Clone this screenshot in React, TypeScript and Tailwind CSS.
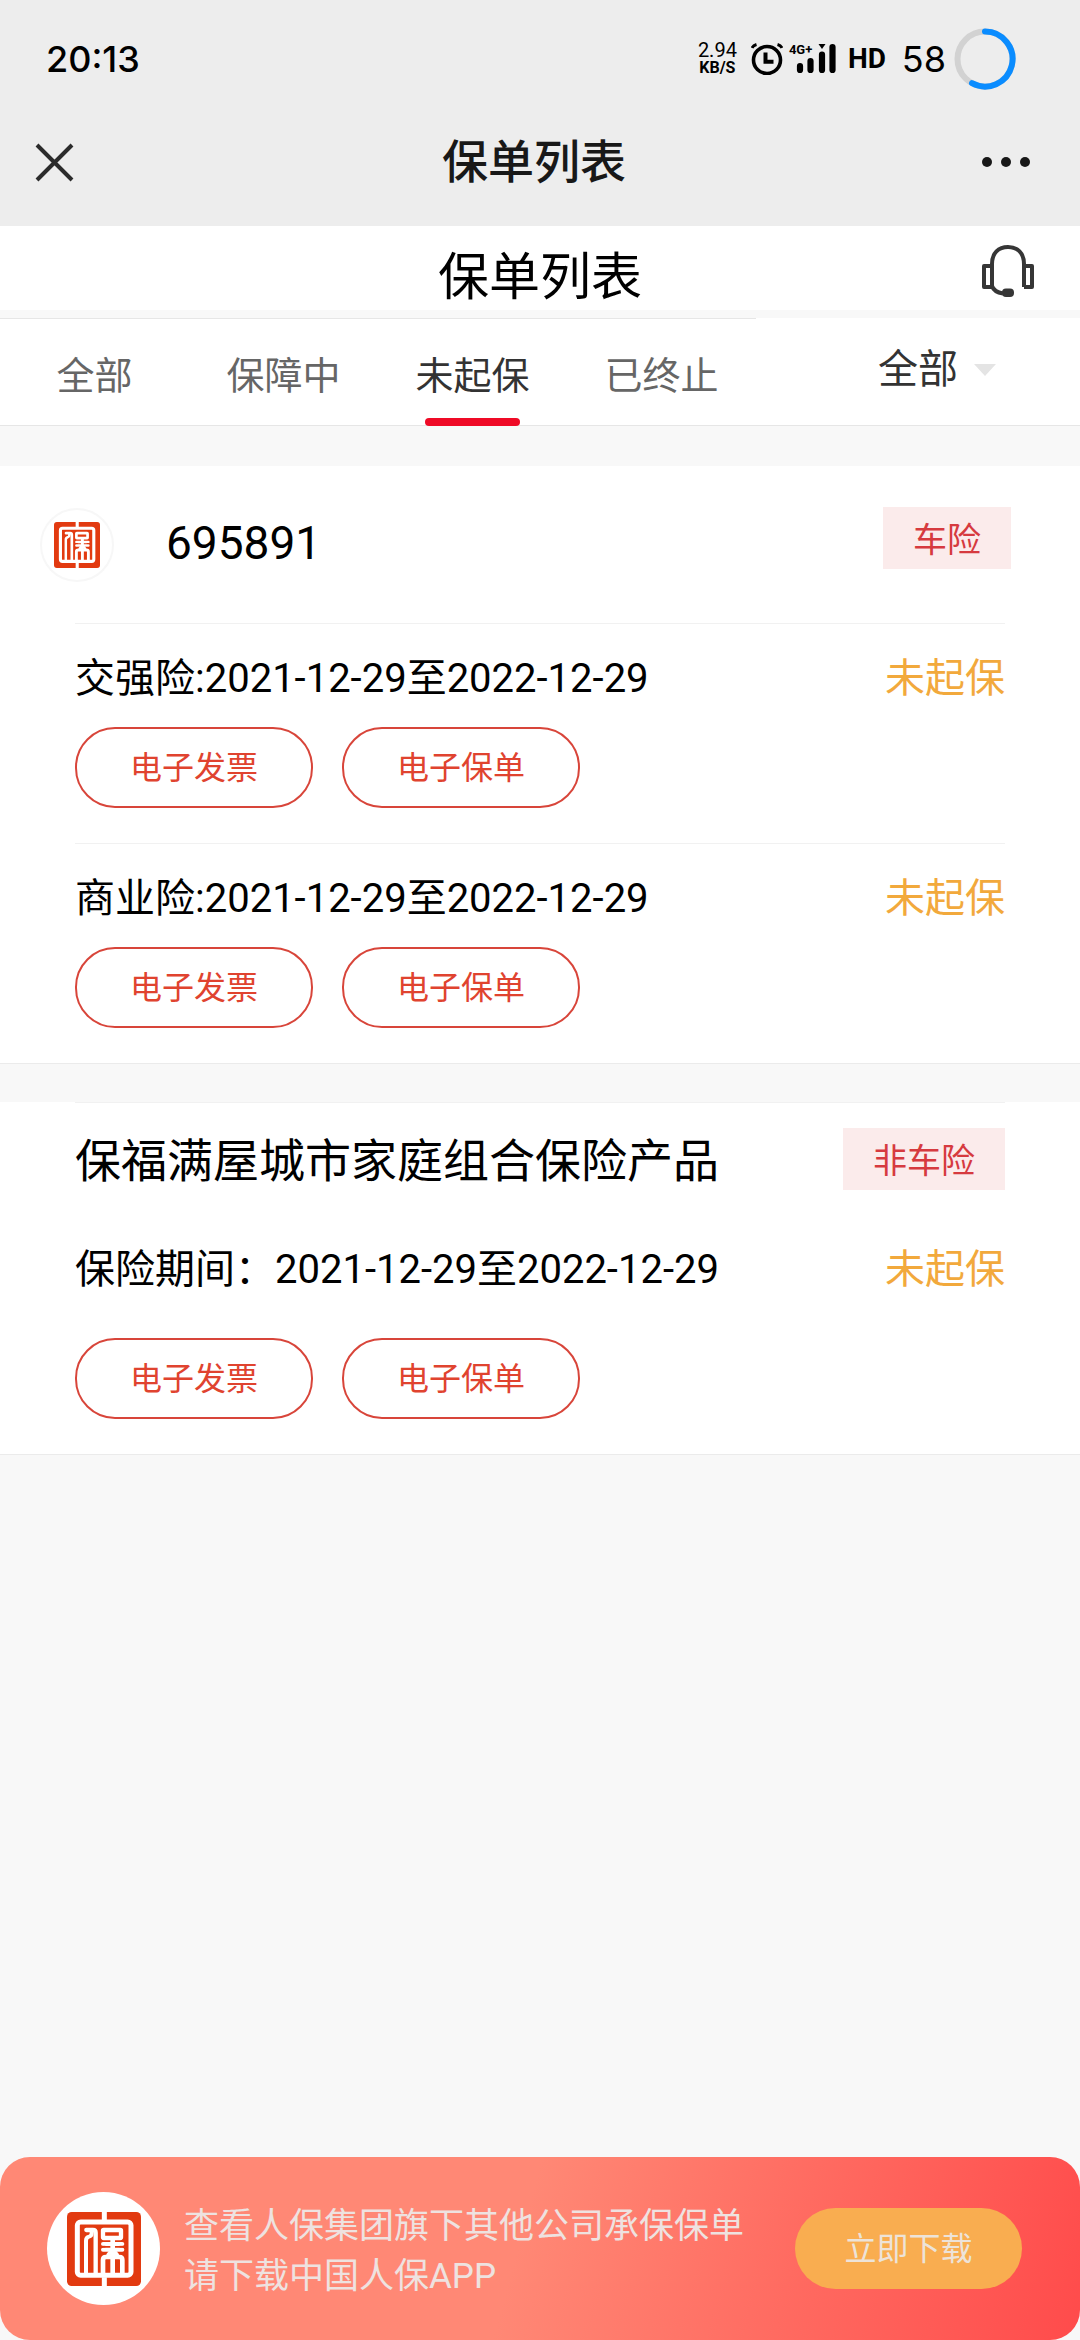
import React, { useState } from "react";

const FONT = "font-['Roboto','Noto_Sans_CJK_SC',sans-serif]";

function SealLogo({ className }: { className: string }) {
  return (
    <svg viewBox="0 0 222 222" className={className} fill="none" aria-hidden="true">
      <rect width="222" height="222" rx="14" fill="#e23a10" />
      <path d="M112 0v24M112 196v26" stroke="#fff" strokeWidth="15" />
      <rect x="31" y="30" width="161" height="160" rx="10" stroke="#fff" strokeWidth="15" />
      <g stroke="#fff" strokeWidth="12" strokeLinecap="round" strokeLinejoin="round">
        <path d="M58 54h20q8 0 8 8v126" strokeWidth="13" />
        <path d="M74 56v8q0 8-8 10q-9 2-9 12v100" />
        <rect x="108" y="54" width="54" height="24" rx="2" strokeWidth="13" />
        <path d="M137 80v108" strokeWidth="14" />
        <path d="M108 96h58M108 113h58" strokeWidth="12" />
        <path d="M108 188v-44q0-9 9-9h40q9 0 9 9v44" strokeWidth="14" />
        <path d="M124 128l10-12M150 128l-10-12" />
      </g>
      <rect x="99" y="101.500" width="16" height="5" fill="#e23a10" />
      <rect x="158" y="101.500" width="18" height="5" fill="#e23a10" />
    </svg>
  );
}

function AlarmIcon() {
  return (
    <svg viewBox="0 0 32 32" className="size-8" fill="none" stroke="#000" aria-hidden="true">
      <circle cx="16" cy="17" r="13.500" strokeWidth="3.600" />
      <path d="M14.500 9.500v9.300h8" strokeWidth="4" />
      <path d="M1 5q1-2.500 4.500-3.500M31 5q-1-2.500-4.500-3.500" strokeWidth="3" />
    </svg>
  );
}

function SignalIcon() {
  return (
    <svg viewBox="0 0 40 31" className="h-[31px] w-10" fill="none" stroke="#000" strokeWidth="6.200" strokeLinecap="round" aria-hidden="true">
      <path d="M4 23v4M14.500 18v9M26 11.500V27M36.500 4v23" />
      <path d="M22.500 1h7l-3.500 5z" fill="#000" stroke="none" />
    </svg>
  );
}

function BatteryRing() {
  return (
    <svg viewBox="0 0 62 62" className="size-[62px]" fill="none" strokeWidth="6" aria-label="58%" role="img">
      <circle cx="31" cy="31" r="27.500" stroke="#d2d2d2" />
      <path d="M31 3.500A27.500 27.500 0 1 1 18 55.200" stroke="#0a8cff" strokeLinecap="round" />
    </svg>
  );
}

function HeadsetIcon() {
  return (
    <svg viewBox="0 0 54 54" className="size-[54px]" fill="none" stroke="#363636" strokeWidth="4" aria-hidden="true">
      <path d="M11 44V20C11 9 17.500 3 27 3s16 6 16 17v23" />
      <path d="M11 22H3v21h8M43 22h8v21h-8" strokeLinejoin="round" />
      <path d="M11 42q2 6 11 7.500" />
      <rect x="21" y="44.500" width="12" height="8.500" rx="4" fill="#363636" stroke="none" />
    </svg>
  );
}

function StatusBar() {
  return (
    <div className="flex h-[97px] items-center justify-between pt-5 pr-16 pl-[46px] text-black">
      <span className="font-['Inter'] text-[36px] leading-[40px] font-medium">20:13</span>
      <div className="flex items-center">
        <div className="mr-[14px] flex flex-col items-center">
          <span className="text-[20px] leading-[18px]">2.94</span>
          <span className="text-[16px] leading-[18px] font-bold">KB/S</span>
        </div>
        <AlarmIcon />
        <div className="relative mr-3 ml-[13px]">
          <SignalIcon />
          <span className="absolute -top-px -left-[7px] text-[13px] leading-[15px] font-bold">4G+</span>
        </div>
        <span className="mr-4 text-[28px] leading-[40px] font-bold">HD</span>
        <span className="mr-2 font-['Inter'] text-[36px] leading-[40px]">58</span>
        <BatteryRing />
      </div>
    </div>
  );
}

function NavBar() {
  return (
    <div className="grid h-[129px] grid-cols-[1fr_auto_1fr] items-center pr-[46px] pl-[34px]">
      <button type="button" aria-label="关闭" className="justify-self-start">
        <svg viewBox="0 0 40 40" className="size-10" stroke="#2b2b2b" strokeWidth="4" aria-hidden="true">
          <path d="M3 3l35 35M38 3L3 38" />
        </svg>
      </button>
      <p className="text-[46px] leading-[60px] font-medium text-[#181818]">保单列表</p>
      <button type="button" aria-label="更多" className="mr-1 justify-self-end">
        <svg viewBox="0 0 48 10" className="h-[10px] w-12" fill="#181818" aria-hidden="true">
          <circle cx="5" cy="5" r="5" />
          <circle cx="24" cy="5" r="5" />
          <circle cx="43" cy="5" r="5" />
        </svg>
      </button>
    </div>
  );
}

const TABS = ["全部", "保障中", "未起保", "已终止"];

function FilterBar() {
  const [active, setActive] = useState("未起保");
  return (
    <div className="grid h-[108px] grid-cols-[7fr_3fr] bg-white">
      <div role="tablist" className="grid grid-cols-4 border-y border-[#e6e6e6]">
        {TABS.map((tab) => {
          const selected = tab === active;
          return (
            <button
              key={tab}
              type="button"
              role="tab"
              aria-selected={selected}
              onClick={() => setActive(tab)}
              className={`relative pt-2 text-[38px] leading-[50px] ${selected ? "text-[#333]" : "text-[#666]"}`}
            >
              {tab}
              {selected && <span className="absolute inset-x-1/4 -bottom-px h-2 rounded-full bg-[#ef0a26]" />}
            </button>
          );
        })}
      </div>
      <label className="flex items-center justify-center gap-4 border-b border-[#e6e6e6] pb-1 pl-[38px]">
        <select aria-label="险种" className="h-[60px] w-20 appearance-none bg-transparent text-[40px] leading-[60px] text-[#333] outline-none">
          <option>全部</option>
          <option>车险</option>
          <option>非车险</option>
        </select>
        <svg viewBox="0 0 22 12" className="h-3 w-[22px]" fill="#e4e4e4" aria-hidden="true">
          <path d="M0 0h22L11 12z" />
        </svg>
      </label>
    </div>
  );
}

function Tag({ children }: { children: string }) {
  return (
    <span className="bg-[#fbebeb] px-[30px] pt-1 text-[34px] leading-[58px] text-[#d63a3f]">{children}</span>
  );
}

function PeriodLine({ text }: { text: string }) {
  return (
    <div className="flex items-center justify-between pt-0.5 text-[40px] leading-[60px]">
      <p>{text}</p>
      <span className="text-[#f2a93c]">未起保</span>
    </div>
  );
}

function Actions() {
  return (
    <div className="flex gap-[29px]">
      {["电子发票", "电子保单"].map((label) => (
        <button
          key={label}
          type="button"
          className="h-[81px] w-[238px] rounded-[40px] border-2 border-[#d8453a] text-[32px] leading-[60px] text-[#e0432f]"
        >
          {label}
        </button>
      ))}
    </div>
  );
}

export default function App() {
  return (
    <div className={`flex min-h-screen flex-col bg-[#f8f8f8] text-black ${FONT}`}>
      <header className="bg-[#ededed]">
        <StatusBar />
        <NavBar />
      </header>

      <div className="grid h-[84px] grid-cols-[1fr_auto_1fr] bg-white px-[45px] pt-[18px]">
        <h1 className="col-start-2 text-[51px] leading-[67px]">保单列表</h1>
        <button type="button" aria-label="客服" className="self-start justify-self-end">
          <HeadsetIcon />
        </button>
      </div>

      <div className="pt-2">
        <FilterBar />
      </div>

      <main className="mt-10 flex flex-col gap-[38px]">
        <section className="border-b border-[#ebebeb] bg-white">
          <div className="flex h-[157px] items-center pr-[69px] pl-10">
            <span className="flex size-[74px] items-center justify-center rounded-full border-2 border-[#f7f7f7]">
              <SealLogo className="size-[46px]" />
            </span>
            <h2 className="ml-[52px] pb-1 text-[46px] leading-[60px]">695891</h2>
            <span className="mt-[41px] ml-auto flex self-start">
              <Tag>车险</Tag>
            </span>
          </div>
          {["交强险:2021-12-29至2022-12-29", "商业险:2021-12-29至2022-12-29"].map((text) => (
            <div key={text} className="mx-[75px] flex flex-col gap-[18px] border-t border-[#f1f1f1] pt-[23px] pb-[35px]">
              <PeriodLine text={text} />
              <Actions />
            </div>
          ))}
        </section>

        <section className="border-b border-[#ebebeb] bg-white">
          <div className="mx-[75px] border-t border-[#f1f1f1] pt-[25px] pb-[35px]">
            <div className="mb-12 flex items-center justify-between">
              <h2 className="pt-1 text-[46px] leading-[58px]">保福满屋城市家庭组合保险产品</h2>
              <span className="flex">
                <Tag>非车险</Tag>
              </span>
            </div>
            <div className="flex flex-col gap-[38px]">
              <PeriodLine text="保险期间：2021-12-29至2022-12-29" />
              <Actions />
            </div>
          </div>
        </section>
      </main>

      <footer className="mt-auto flex h-[183px] items-center rounded-[30px] bg-[linear-gradient(105deg,#ff8875_48%,#ff4b4b_100%)] pr-[58px] pl-[47px]">
        <span className="flex size-[113px] items-center justify-center rounded-full bg-white">
          <SealLogo className="size-[74px]" />
        </span>
        <p className="ml-6 pt-1.5 text-[35px] leading-[50px] text-[#eee2e0]">
          查看人保集团旗下其他公司承保保单
          <br />
          请下载中国人保APP
        </p>
        <button type="button" className="ml-auto h-[81px] w-[227px] rounded-full bg-[#f9ad50] text-[32px] leading-[60px] text-[#ede3d8]">
          立即下载
        </button>
      </footer>
    </div>
  );
}
